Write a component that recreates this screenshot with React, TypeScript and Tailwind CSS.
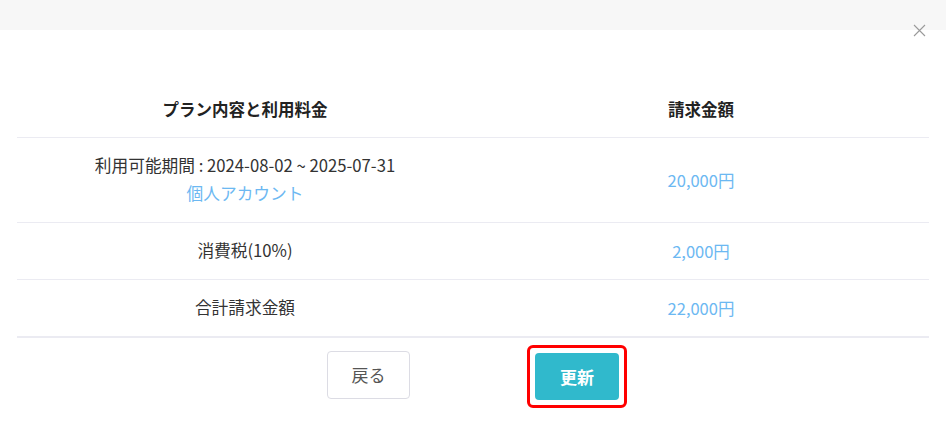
import React from "react";

const font = { fontFamily: '"Noto Sans CJK JP", "Noto Sans", sans-serif' };

export default function App() {
  return (
    <div className="relative w-[946px] h-[424px] bg-white overflow-hidden" style={font}>
      <div className="h-[30px] bg-[#f7f7f7]" />
      <button className="absolute left-[913px] top-[24px] w-[13px] h-[13px] text-[#999]">
        <svg viewBox="0 0 13 13" width="13" height="13" fill="none" stroke="#9a9a9a" strokeWidth="1.1">
          <path d="M1 1 L12 12 M12 1 L1 12" />
        </svg>
      </button>
      <div className="mx-[17px] mt-[51px]">
        <div className="grid grid-cols-2 h-[57px] items-center border-b border-[#ebebf2] text-[16.5px] font-bold text-[#222]">
          <div className="text-center">プラン内容と利用料金</div>
          <div className="text-center">請求金額</div>
        </div>
        <div className="grid grid-cols-2 h-[85px] items-center border-b border-[#ebebf2] text-[16.7px] text-[#333]">
          <div className="flex flex-col items-center leading-[28px] -mt-[2px]">
            <div>利用可能期間 : 2024-08-02 ~ 2025-07-31</div>
            <div className="text-[#6cb8f2]">個人アカウント</div>
          </div>
          <div className="text-center text-[#6cb8f2] text-[16.5px]">20,000円</div>
        </div>
        <div className="grid grid-cols-2 h-[57px] items-center border-b border-[#ebebf2] text-[16.7px] text-[#333]">
          <div className="text-center">消費税(10%)</div>
          <div className="text-center text-[#6cb8f2] text-[16.5px]">2,000円</div>
        </div>
        <div className="grid grid-cols-2 h-[58px] items-center border-b-2 border-[#ebebf2] text-[16.7px] text-[#333]">
          <div className="text-center">合計請求金額</div>
          <div className="text-center text-[#6cb8f2] text-[16.5px]">22,000円</div>
        </div>
      </div>
      <div className="flex justify-center items-start gap-[117px] mt-[7px] pl-[8px]">
        <button className="mt-[6px] w-[83px] h-[48px] rounded-[4px] border border-[#dcdce4] bg-white text-[17px] text-[#555]">
          戻る
        </button>
        <div className="border-[3px] border-[#ff0000] rounded-[6px] p-[5px]">
          <button className="block w-[84px] h-[47px] rounded-[4px] bg-[#30b9cc] text-[17px] font-bold text-white">
            更新
          </button>
        </div>
      </div>
    </div>
  );
}
